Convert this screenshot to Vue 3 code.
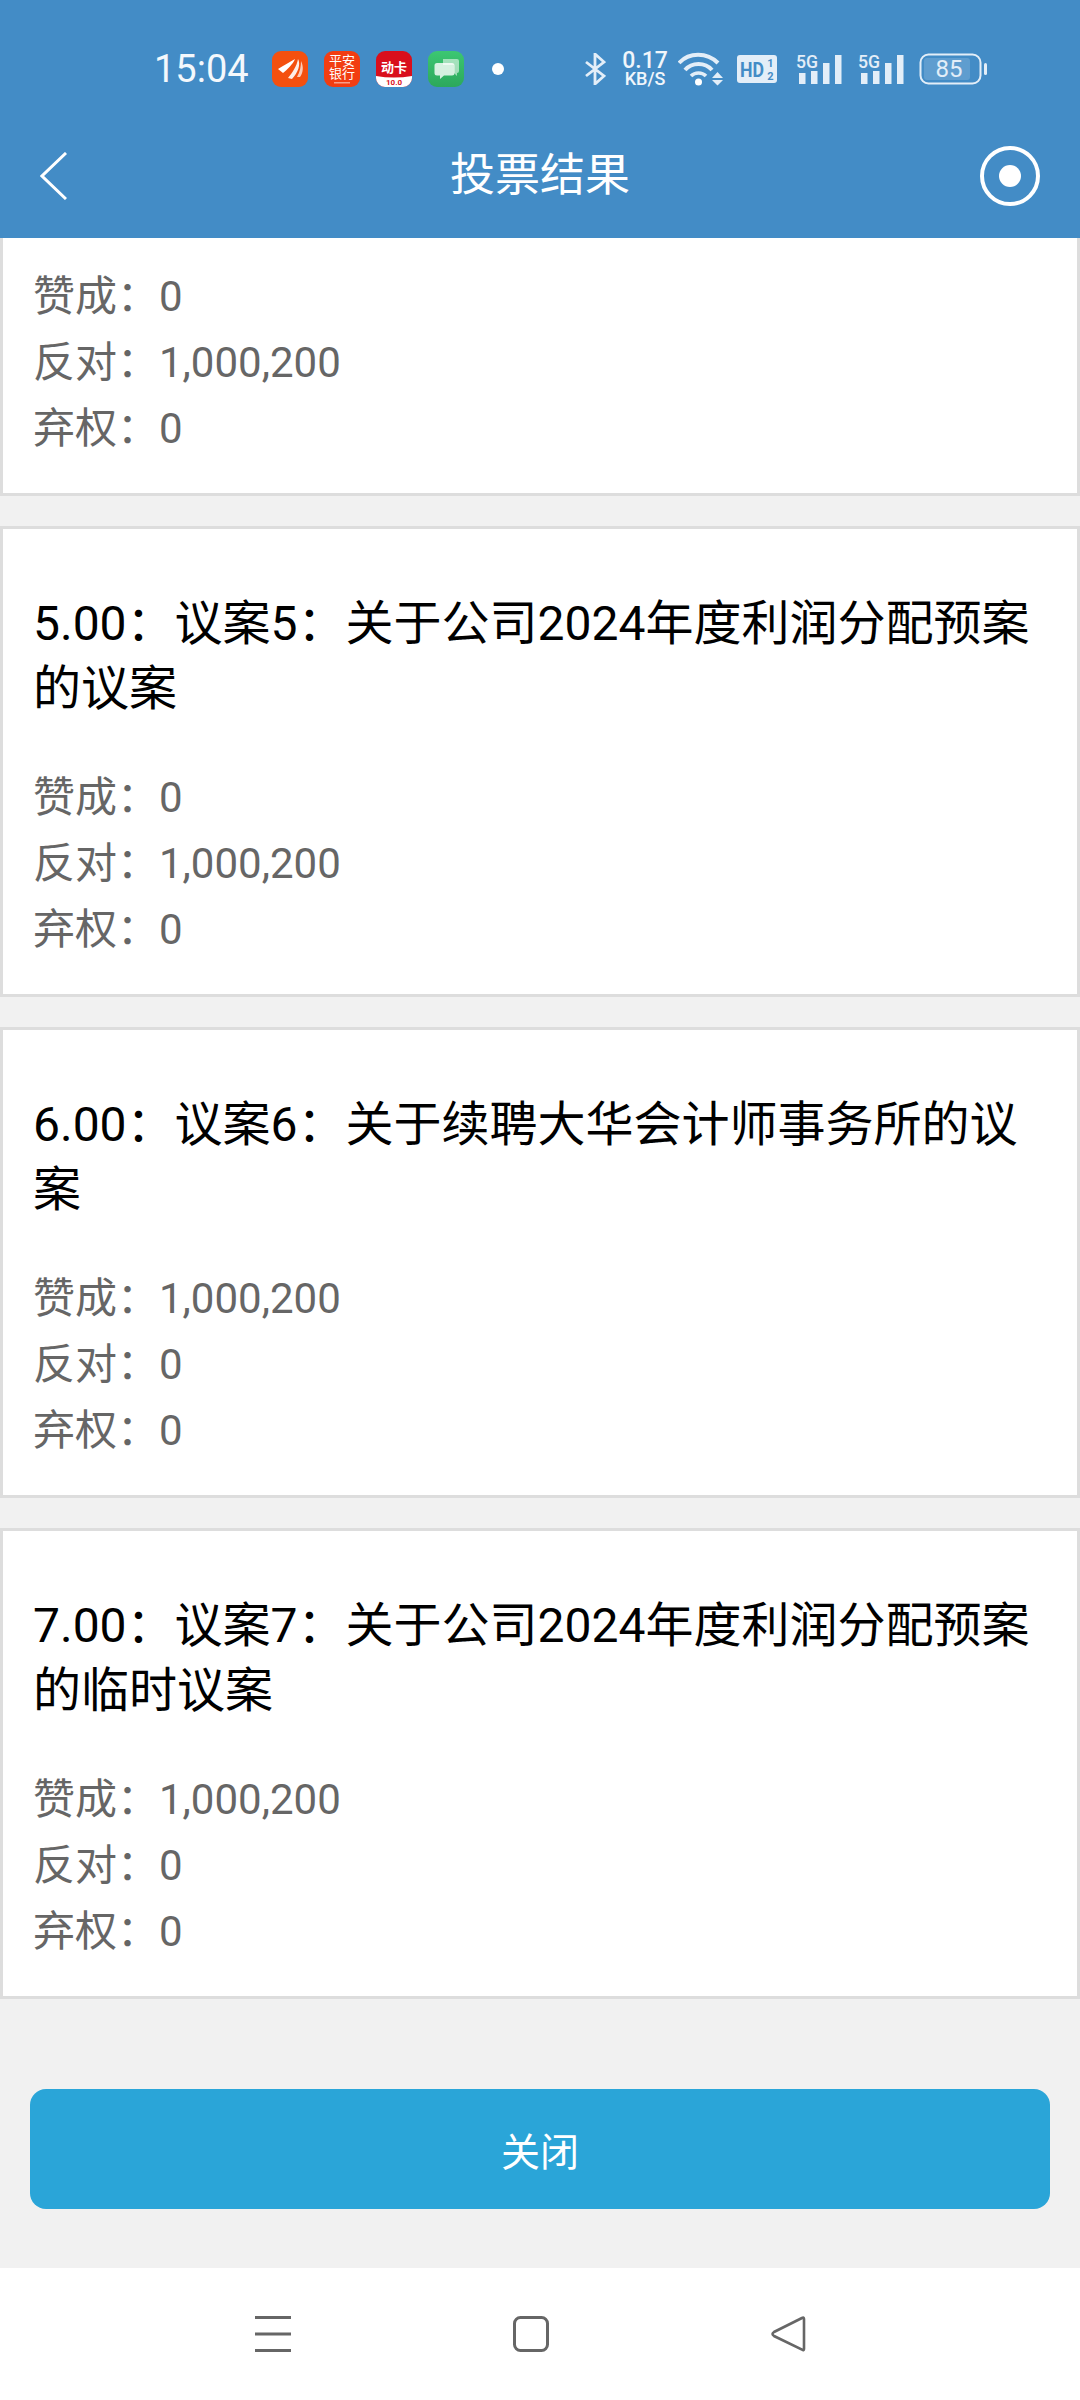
<template>
  <div class="page" lang="zh-CN">
    <div class="top-bar">
      <div class="status-bar">
        <span class="time">15:04</span>
        <div class="app-icons">
          <svg class="app-icon" viewBox="0 0 36 36">
            <rect width="36" height="36" rx="9" fill="#f4500f" />
            <path d="M6 18 C12 14 18 11 23 8 C21 13 15 19 11 22 Z" fill="#fff" />
            <path d="M16 27 C20 22 25 15 26 8 C29 13 26 22 20 28 Z" fill="#fff" opacity="0.9" />
            <path d="M25 26 C28 21 29 15 29 10 C32 16 31 22 28 26 Z" fill="#fff" opacity="0.7" />
          </svg>
          <svg class="app-icon" viewBox="0 0 36 36">
            <rect width="36" height="36" rx="9" fill="#f23d12" />
            <text x="18" y="14" class="icon-text" font-size="13">平安</text>
            <text x="18" y="27" class="icon-text" font-size="13">银行</text>
            <rect x="10" y="31" width="16" height="1.500" fill="#fff" opacity="0.5" />
          </svg>
          <svg class="app-icon" viewBox="0 0 36 36">
            <rect width="36" height="36" rx="9" fill="#d90f1c" />
            <path d="M0 25 Q18 28 36 25 V27 A9 9 0 0 1 27 36 H9 A9 9 0 0 1 0 27 Z" fill="#fff" />
            <text x="18" y="21" class="icon-text bold" font-size="13">动卡</text>
            <text x="18" y="34" class="icon-text bold red" font-size="8">10.0</text>
          </svg>
          <svg class="app-icon" viewBox="0 0 36 36">
            <defs>
              <linearGradient id="msgGreen" x1="0" y1="0" x2="0" y2="1">
                <stop offset="0" stop-color="#3cc772" />
                <stop offset="1" stop-color="#2ca85c" />
              </linearGradient>
            </defs>
            <rect width="36" height="36" rx="9" fill="url(#msgGreen)" />
            <path d="M15 8 H29 A2 2 0 0 1 31 10 V20 A2 2 0 0 1 29 22 V25 L26 22 V14 H15 Z" fill="#fff" opacity="0.55" />
            <path d="M9 12 H24 A2.500 2.500 0 0 1 26.500 14.500 V22 A2.500 2.500 0 0 1 24 24.500 H16 L12 28 V24.500 H9 A2.500 2.500 0 0 1 6.500 22 V14.500 A2.500 2.500 0 0 1 9 12 Z" fill="#fff" opacity="0.8" />
          </svg>
        </div>
        <span class="dot"></span>
        <svg class="bluetooth" viewBox="0 0 22 32">
          <path d="M2 9 L20 23 L11 31 V1 L20 9 L2 23" fill="none" stroke="#e3eef8" stroke-width="2.800" />
        </svg>
        <div class="speed">
          <span class="speed-num">0.17</span>
          <span class="speed-unit">KB/S</span>
        </div>
        <svg class="wifi" viewBox="0 0 45 34">
          <path d="M1 11 C11 0 29 0 40 11" fill="none" stroke="#e3eef8" stroke-width="4" />
          <path d="M7 18 C14 10 27 10 34 18" fill="none" stroke="#e3eef8" stroke-width="4" />
          <path d="M13 24 C17 20 24 20 28 24" fill="none" stroke="#e3eef8" stroke-width="3.600" />
          <circle cx="20.500" cy="30" r="3.500" fill="#fff" />
          <path d="M34 26 L39.500 20 L45 26 Z M34 28 H45 L39.500 33.500 Z" fill="#e3eef8" />
        </svg>
        <svg class="hd" viewBox="0 0 40 28">
          <rect width="40" height="28" rx="3" fill="#e3eef8" />
          <text x="3" y="22" class="hd-text" font-size="20" textLength="24" lengthAdjust="spacingAndGlyphs">HD</text>
          <text x="33.500" y="12" class="hd-sub" font-size="11">1</text>
          <text x="33.500" y="25" class="hd-sub" font-size="11">2</text>
        </svg>
        <svg class="signal first" viewBox="0 -4 46 36">
          <text x="0" y="15" class="sig-text" font-size="19" textLength="22" lengthAdjust="spacingAndGlyphs">5G</text>
          <rect x="3" y="20" width="6.500" height="11" fill="#e3eef8" />
          <rect x="15" y="18" width="6.500" height="13" fill="#e3eef8" />
          <rect x="27" y="10" width="6.500" height="21" fill="#e3eef8" />
          <rect x="39" y="2" width="6.500" height="29" fill="#e3eef8" />
        </svg>
        <svg class="signal" viewBox="0 -4 46 36">
          <text x="0" y="15" class="sig-text" font-size="19" textLength="22" lengthAdjust="spacingAndGlyphs">5G</text>
          <rect x="3" y="20" width="6.500" height="11" fill="#e3eef8" />
          <rect x="15" y="18" width="6.500" height="13" fill="#e3eef8" />
          <rect x="27" y="10" width="6.500" height="21" fill="#e3eef8" />
          <rect x="39" y="2" width="6.500" height="29" fill="#e3eef8" />
        </svg>
        <svg class="battery" viewBox="0 0 68 32">
          <rect x="1.500" y="1.500" width="60" height="29" rx="8" fill="none" stroke="#e3eef8" stroke-width="2" />
          <rect x="5" y="5" width="46" height="22" rx="3" fill="#e3eef8" opacity="0.18" />
          <rect x="65" y="10" width="3" height="12" rx="1.500" fill="#e3eef8" />
          <text x="30" y="24" class="bat-text" font-size="24">85</text>
        </svg>
      </div>
      <div class="nav-bar">
        <div class="nav-side">
          <svg class="back" viewBox="0 0 27 48">
            <path d="M26 1 L2 24 L26 47" fill="none" stroke="#fff" stroke-width="3" />
          </svg>
        </div>
        <span class="nav-title">投票结果</span>
        <div class="nav-side">
          <svg class="record" viewBox="0 0 60 60">
            <circle cx="30" cy="30" r="28" fill="none" stroke="#fff" stroke-width="4" />
            <circle cx="30" cy="30" r="11" fill="#fff" />
          </svg>
        </div>
      </div>
    </div>

    <div class="content">
      <div class="card card-cut">
        <div class="result" v-for="row in firstRows" :key="row.label">
          {{ row.label }}：{{ row.value }}
        </div>
      </div>
      <div class="card" v-for="item in proposals" :key="item.title">
        <div class="card-title">{{ item.title }}</div>
        <div class="results">
          <div class="result" v-for="row in item.rows" :key="row.label">
            {{ row.label }}：{{ row.value }}
          </div>
        </div>
      </div>
      <button class="close-btn">关闭</button>
    </div>

    <div class="bottom-nav">
      <svg class="nav-icon" viewBox="0 0 36 36">
        <path d="M0 1.500 H36 M0 18 H36 M0 34.500 H36" stroke="#666" stroke-width="3" fill="none" />
      </svg>
      <svg class="nav-icon" viewBox="0 0 36 36">
        <rect x="1.500" y="1.500" width="33" height="33" rx="6" fill="none" stroke="#666" stroke-width="3" />
      </svg>
      <svg class="nav-icon" viewBox="0 0 36 36">
        <path d="M33 3 V33 Q33 35 31 33.500 L3 20 Q0 18 3 16 L31 2 Q33 1 33 3 Z" fill="none" stroke="#666" stroke-width="2.600" />
      </svg>
    </div>
  </div>
</template>

<script setup>
const makeRows = (yes, no, abstain) => [
  { label: '赞成', value: yes },
  { label: '反对', value: no },
  { label: '弃权', value: abstain }
]

const firstRows = makeRows('0', '1,000,200', '0')

const proposals = [
  {
    title: '5.00：议案5：关于公司2024年度利润分配预案的议案',
    rows: makeRows('0', '1,000,200', '0')
  },
  {
    title: '6.00：议案6：关于续聘大华会计师事务所的议案',
    rows: makeRows('1,000,200', '0', '0')
  },
  {
    title: '7.00：议案7：关于公司2024年度利润分配预案的临时议案',
    rows: makeRows('1,000,200', '0', '0')
  }
]
</script>

<style>
html,
body {
  margin: 0;
  background: #f1f1f1;
}
</style>

<style scoped>
.page {
  width: 1080px;
  height: 2400px;
  display: flex;
  flex-direction: column;
  overflow: hidden;
  background: #f1f1f1;
  font-family: Roboto, "Noto Sans CJK SC", sans-serif;
}

.top-bar {
  height: 238px;
  flex-shrink: 0;
  background: #438cc6;
}

.status-bar {
  height: 114px;
  display: flex;
  align-items: center;
  padding: 24px 0 0 154px;
  box-sizing: border-box;
  color: #fff;
}

.time {
  width: 118px;
  font-size: 38px;
  line-height: 40px;
  color: #f4f8fc;
}

.app-icons {
  display: flex;
  gap: 16px;
}

.app-icon {
  width: 36px;
  height: 36px;
}

.icon-text {
  fill: #fff;
  text-anchor: middle;
  font-family: "Noto Sans CJK SC", sans-serif;
}

.bold {
  font-weight: 700;
}

.red {
  fill: #d90f1c;
  font-family: Roboto, sans-serif;
}

.dot {
  width: 12px;
  height: 12px;
  margin-left: 28px;
  border-radius: 50%;
  background: #fff;
}

.bluetooth {
  width: 22px;
  height: 32px;
  margin-left: 80px;
}

.speed {
  width: 46px;
  margin-left: 16px;
  display: flex;
  flex-direction: column;
  align-items: center;
  color: #f0f6fb;
  font-weight: 500;
}

.speed-num {
  font-size: 23px;
  line-height: 20px;
}

.speed-unit {
  font-size: 18px;
  line-height: 16px;
}

.wifi {
  width: 45px;
  height: 34px;
  margin-left: 10px;
}

.hd {
  width: 40px;
  height: 28px;
  margin-left: 14px;
}

.hd-text {
  fill: #438cc6;
  font-weight: 700;
}

.hd-sub {
  fill: #438cc6;
  font-weight: 700;
  text-anchor: middle;
}

.signal {
  width: 46px;
  height: 36px;
  margin: -4px 0 0 16px;
}

.signal.first {
  margin-left: 19px;
}

.sig-text {
  fill: #e3eef8;
  font-weight: 500;
}

.battery {
  width: 68px;
  height: 32px;
  margin-left: 15px;
}

.bat-text {
  fill: #e3eef8;
  text-anchor: middle;
}

.nav-bar {
  height: 124px;
  display: flex;
  align-items: center;
  justify-content: space-between;
  padding: 0 40px;
  color: #fff;
}

.nav-side {
  width: 60px;
  height: 60px;
  display: flex;
  align-items: center;
}

.back {
  width: 27px;
  height: 48px;
}

.nav-title {
  font-size: 45px;
  line-height: 60px;
}

.record {
  width: 60px;
  height: 60px;
}

.content {
  flex: 1;
  display: flex;
  flex-direction: column;
  gap: 30px;
}

.card {
  border: 3px solid #ddd;
  background: #fff;
  padding: 62px 31px 31px 30px;
  height: 471px;
  box-sizing: border-box;
}

.card-cut {
  height: 258px;
  border-top: 0;
  padding-top: 26px;
}

.card-title {
  font-size: 48px;
  line-height: 65px;
  color: #000;
}

.results {
  margin-top: 44px;
}

.result {
  font-size: 42px;
  line-height: 66px;
  color: #666;
}

.close-btn {
  display: block;
  width: 1020px;
  height: 120px;
  margin: 60px 30px 0;
  padding: 0;
  border: 0;
  border-radius: 16px;
  background: #2aa5d8;
  color: #fff;
  font-size: 39px;
  font-family: inherit;
}

.bottom-nav {
  height: 132px;
  flex-shrink: 0;
  background: #fff;
  display: flex;
  align-items: flex-start;
  padding: 0 0 0 255px;
  gap: 222px;
}

.nav-icon {
  width: 36px;
  height: 36px;
  margin-top: 48px;
}
</style>
